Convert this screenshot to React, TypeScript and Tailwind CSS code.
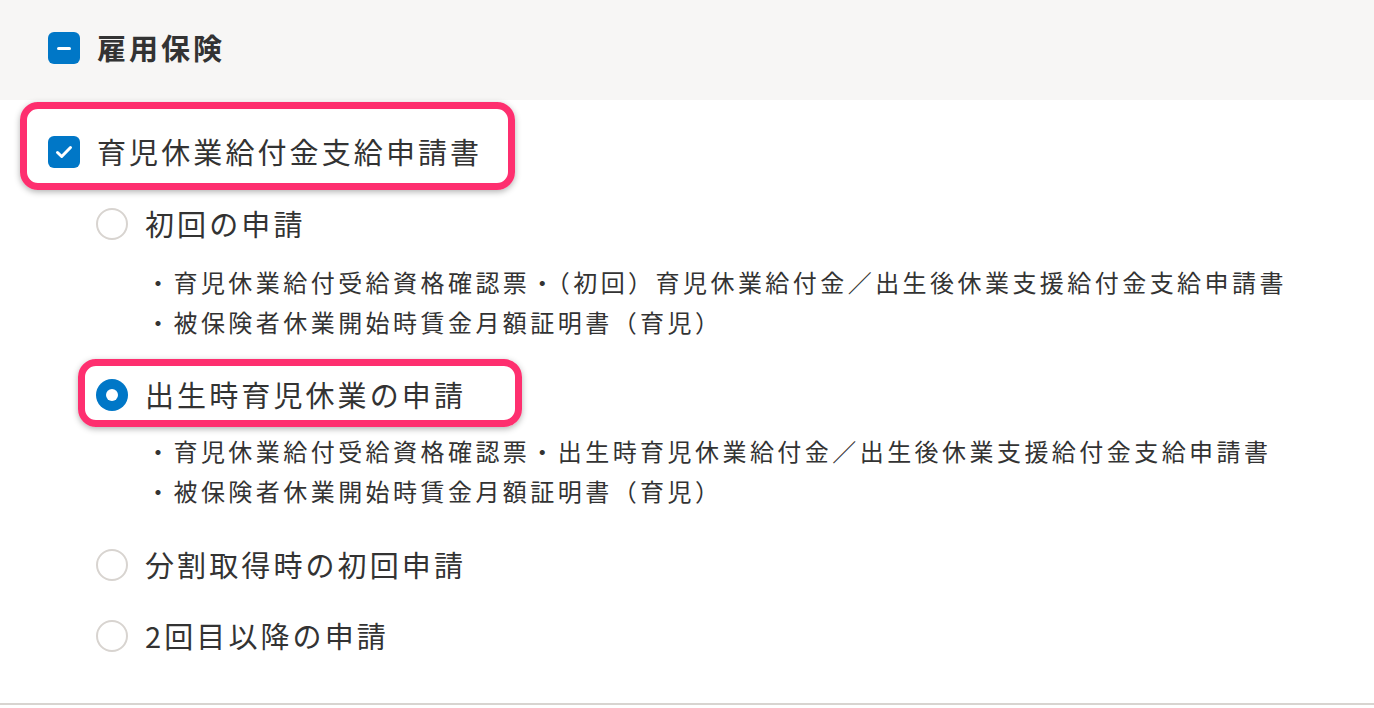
import type { ReactNode } from "react";

const font = { fontFamily: '"Noto Sans CJK JP", "Noto Sans", sans-serif' };

type Option = {
  label: string;
  checked?: boolean;
  docs?: string[];
  gap: string;
  highlight?: boolean;
};

const options: Option[] = [
  {
    label: "初回の申請",
    gap: "mt-6",
    docs: [
      "・育児休業給付受給資格確認票・（初回）育児休業給付金／出生後休業支援給付金支給申請書",
      "・被保険者休業開始時賃金月額証明書（育児）",
    ],
  },
  {
    label: "出生時育児休業の申請",
    checked: true,
    highlight: true,
    gap: "mt-[29px]",
    docs: [
      "・育児休業給付受給資格確認票・出生時育児休業給付金／出生後休業支援給付金支給申請書",
      "・被保険者休業開始時賃金月額証明書（育児）",
    ],
  },
  { label: "分割取得時の初回申請", gap: "mt-[30px]" },
  { label: "2回目以降の申請", gap: "mt-[23px]" },
];

function Radio({ checked }: { checked?: boolean }) {
  if (checked) {
    return (
      <span className="grid h-8 w-8 shrink-0 place-items-center rounded-full bg-[#0077c7]">
        <span className="h-3 w-3 rounded-full bg-white" />
      </span>
    );
  }
  return <span className="h-8 w-8 shrink-0 rounded-full border-2 border-[#d8d4d0] bg-white" />;
}

function Callout({ className }: { className: string }) {
  return (
    <span
      className={`pointer-events-none absolute rounded-[18px] border-[7px] border-[#fe2f6f] shadow-[0_2px_6px_rgba(0,0,0,0.3)] ${className}`}
    />
  );
}

function Row({ children, className = "" }: { children: ReactNode; className?: string }) {
  return <div className={`relative flex h-12 items-center ${className}`}>{children}</div>;
}

export default function App() {
  return (
    <div className="min-h-[708px] w-[1374px] bg-white text-[#333333]" style={font}>
      <div className="flex h-[100px] items-center gap-[17px] bg-[#f7f6f5] pb-1 pl-12">
        <span className="grid h-8 w-8 place-items-center rounded-[6px] bg-[#0077c7]">
          <span className="h-[3px] w-[14px] rounded-full bg-white" />
        </span>
        <h1 className="text-[29px] font-bold tracking-[3px]">雇用保険</h1>
      </div>

      <div className="border-b-2 border-[#d8d4d0] pb-[43px] pl-12">
        <Row className="mt-[28px]">
          <Callout className="-left-[28px] -top-[26px] h-[88px] w-[495px]" />
          <svg className="h-8 w-8 shrink-0" viewBox="0 0 32 32" fill="none">
            <rect width="32" height="32" rx="6" fill="#0077c7" />
            <path d="M9.5 16.5l4.2 4L22.5 11.5" stroke="white" strokeWidth="3" strokeLinecap="round" strokeLinejoin="round" />
          </svg>
          <span className="ml-[17px] text-[29px] tracking-[3.1px]">育児休業給付金支給申請書</span>
        </Row>

        <div className="pl-12">
          {options.map((opt) => (
            <div key={opt.label}>
              <Row className={opt.gap}>
                {opt.highlight && <Callout className="-left-[18px] -top-[12px] h-[68px] w-[444px]" />}
                <Radio checked={opt.checked} />
                <span className="ml-[17px] text-[29px] tracking-[3.1px]">{opt.label}</span>
              </Row>
              {opt.docs && (
                <div className={opt.checked ? "mt-3 pl-[50px]" : "mt-[14px] pl-[50px]"}>
                  {opt.docs.map((d) => (
                    <p key={d} className="text-[24px] leading-[40px] tracking-[3.45px]">
                      {d}
                    </p>
                  ))}
                </div>
              )}
            </div>
          ))}
        </div>
      </div>
    </div>
  );
}
